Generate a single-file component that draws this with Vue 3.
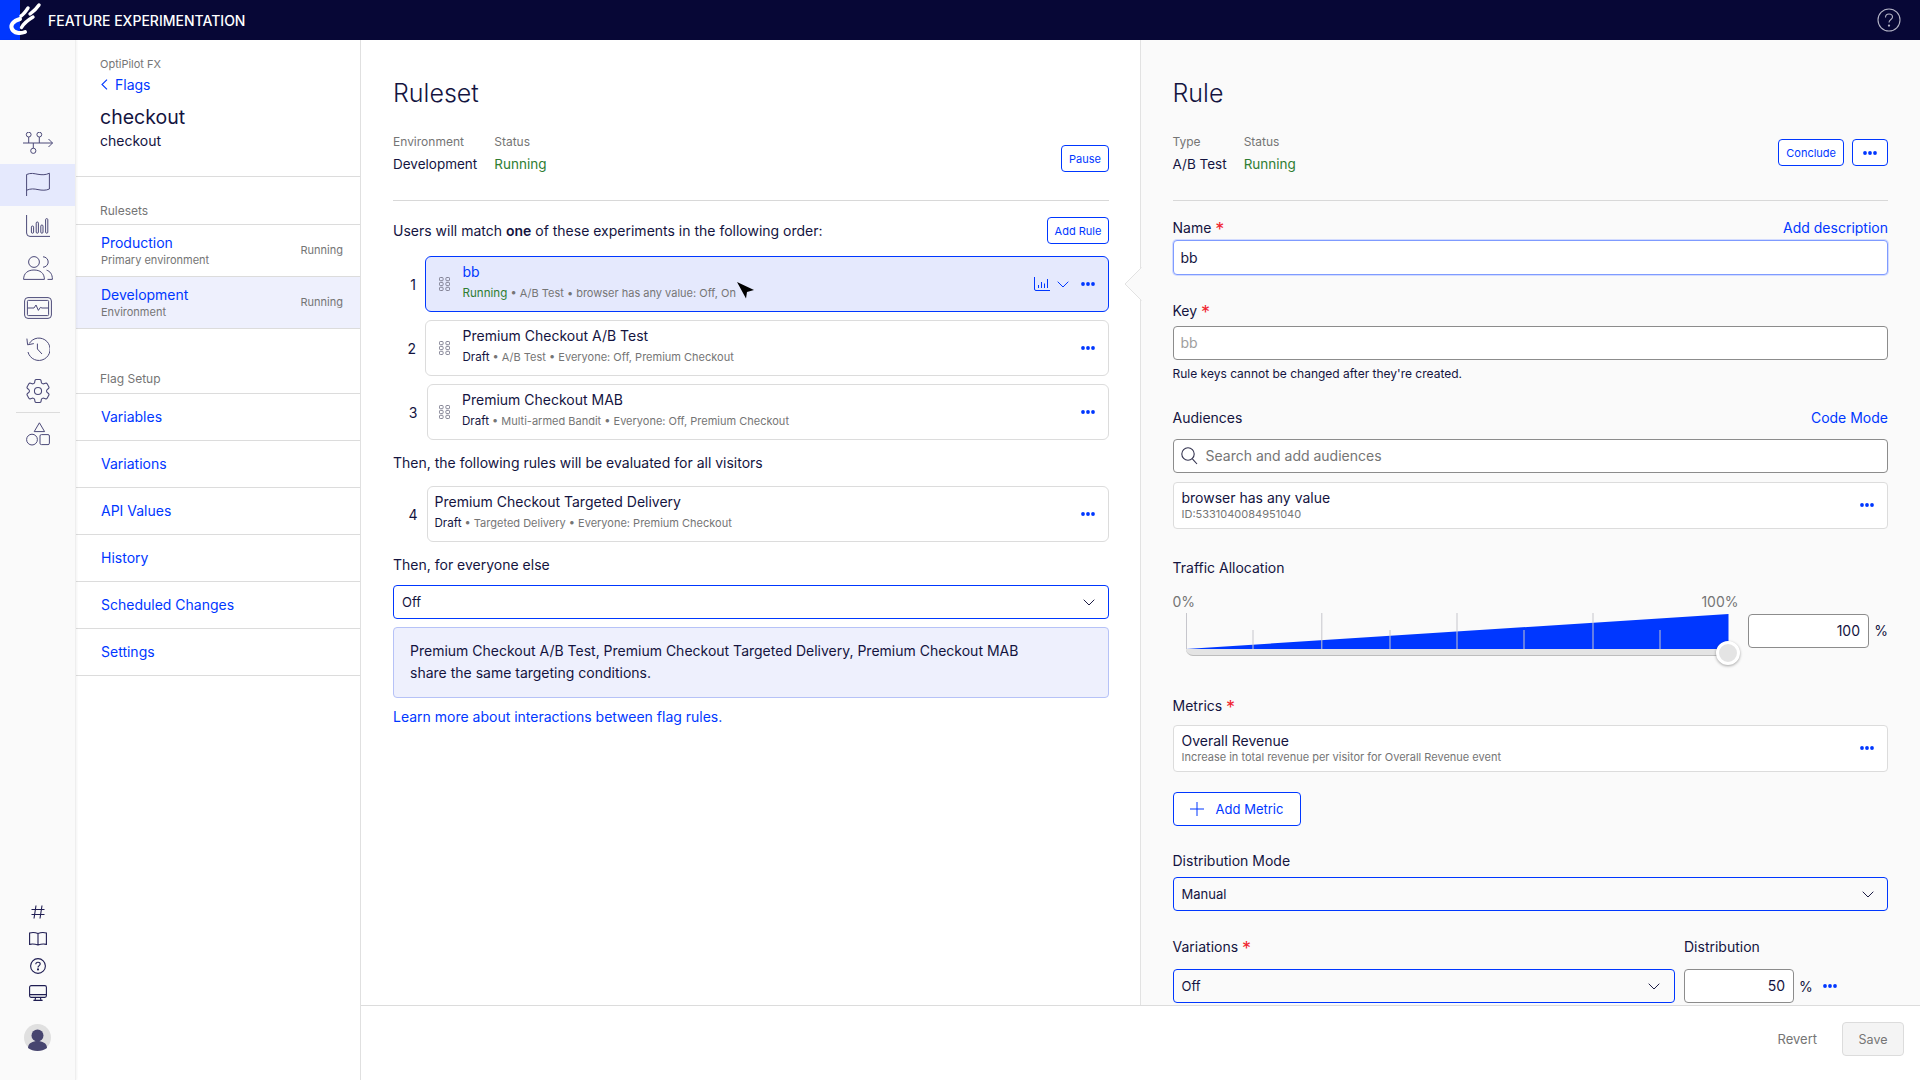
<script setup>
const railIcons = ['network', 'flag', 'chart', 'people', 'monitor', 'history', 'gear']
const setup = ['Variables', 'Variations', 'API Values', 'History', 'Scheduled Changes', 'Settings']
const rules = [
  { n: 1, title: 'bb', status: 'Running', rest: ' • A/B Test • browser has any value: Off, On', active: true },
  { n: 2, title: 'Premium Checkout A/B Test', status: 'Draft', rest: ' • A/B Test • Everyone: Off, Premium Checkout' },
  { n: 3, title: 'Premium Checkout MAB', status: 'Draft', rest: ' • Multi-armed Bandit • Everyone: Off, Premium Checkout', wide: true }
]
const tallTicks = [0.5, 135.8, 271, 407]
const shortTicks = [67, 204, 338, 474]
</script>

<template>
  <div class="app">
    <header class="topbar">
      <div class="logo">
        <svg width="48" height="40" viewBox="0 0 48 40" fill="none" stroke="#fff" stroke-linecap="round">
          <path d="M20 19 C13 21 10 25 12 29 C14 33 20 34 25 32" stroke-width="4" />
          <path d="M33 17 C28 20 24 23 21.5 27.5" stroke-width="3.4" />
          <path d="M28 8 C26 11 24 14 21 16" stroke-width="3.4" />
          <path d="M39 5 C37 8 34 11 30 14" stroke-width="3.4" />
        </svg>
      </div>
      <span class="product">FEATURE EXPERIMENTATION</span>
      <svg class="top-help" width="24" height="24" viewBox="0 0 24 24" fill="none" stroke="#b4b4c6" stroke-width="1.1">
        <circle cx="12" cy="12" r="11" />
        <path d="M8.5 9.5 C8.5 7 10.3 6 12 6 C14 6 15.5 7.3 15.5 9 C15.5 11.5 12 11.5 12 14.5" />
        <circle cx="12" cy="17.6" r="0.6" fill="#b4b4c6" />
      </svg>
    </header>

    <div class="body">
      <nav class="rail">
        <div v-for="ic in railIcons" :key="ic" class="rail-cell" :class="{ on: ic === 'flag' }">
          <svg v-if="ic === 'network'" width="30" height="22" viewBox="0 0 30 22" class="ri up">
            <path d="M0 11 H29.5 M25.5 7 L29.5 11 L25.5 15 M5.7 5 V11 M16.3 5 V11 M10.3 11 V16.2" />
            <circle cx="5.7" cy="2.6" r="2.4" /><circle cx="16.3" cy="2.6" r="2.4" /><circle cx="10.3" cy="18.8" r="2.6" />
          </svg>
          <svg v-else-if="ic === 'flag'" width="24" height="24" viewBox="0 0 24 24" class="ri up">
            <path d="M.6 24 V2.5 C5 .6 8 1.6 12 2.3 S20 3 23.4 1.2 V17 C20 18.6 16 18.4 12 17.6 S5 16.4 .6 18.2" />
          </svg>
          <svg v-else-if="ic === 'chart'" width="24" height="22" viewBox="0 0 24 22" class="ri">
            <path d="M.6 0 V18 A3.4 3.4 0 0 0 4 21.4 H24" />
            <rect x="5.4" y="11" width="2.2" height="7.2" rx="1.1" /><rect x="10.2" y="7" width="2.2" height="11.2" rx="1.1" />
            <rect x="14.8" y="10" width="2.2" height="8.2" rx="1.1" /><rect x="19.6" y="3.6" width="2.2" height="14.6" rx="1.1" />
          </svg>
          <svg v-else-if="ic === 'people'" width="30" height="24" viewBox="0 0 30 24" class="ri">
            <circle cx="11" cy="6" r="5.4" />
            <path d="M.6 23.4 C.6 17 5 14 11 14 S21.4 17 21.4 23.4 Z M20 .8 A5.2 5.2 0 0 1 20 11.2 M23.6 14.2 C27 15.2 29.4 18 29.4 23.4 H24.5" />
          </svg>
          <svg v-else-if="ic === 'monitor'" width="28" height="22" viewBox="0 0 28 22" class="ri up">
            <rect x=".6" y=".6" width="26.8" height="20.8" rx="3.4" />
            <rect x="3.4" y="3.4" width="21.2" height="15.2" rx="1" />
            <path d="M3.4 11 H10 L12 8 L14.4 13.4 L16.4 10.4 L18 11 H24.6" />
          </svg>
          <svg v-else-if="ic === 'history'" width="24" height="24" viewBox="0 0 24 24" class="ri up">
            <path d="M3.2 6.6 A11.2 11.2 0 1 1 2 15 M.9 1.6 L1.6 7.8 L7.8 6.6 M11.4 6.6 L11.4 12 L16 17" />
          </svg>
          <svg v-else width="24" height="24" viewBox="2.6 2.6 18.8 18.8" class="ri gear">
            <path d="M9.594 3.94c.09-.542.56-.94 1.11-.94h2.593c.55 0 1.02.398 1.11.94l.213 1.281c.063.374.313.686.645.87.074.04.147.083.22.127.325.196.72.257 1.075.124l1.217-.456a1.125 1.125 0 0 1 1.37.49l1.296 2.247a1.125 1.125 0 0 1-.26 1.431l-1.003.827c-.293.241-.438.613-.43.992a7.723 7.723 0 0 1 0 .255c-.008.378.137.75.43.991l1.004.827c.424.35.534.955.26 1.43l-1.298 2.247a1.125 1.125 0 0 1-1.369.491l-1.217-.456c-.355-.133-.75-.072-1.076.124a6.47 6.47 0 0 1-.22.128c-.331.183-.581.495-.644.869l-.213 1.281c-.09.543-.56.94-1.11.94h-2.594c-.55 0-1.019-.398-1.11-.94l-.213-1.281c-.062-.374-.312-.686-.644-.87a6.52 6.52 0 0 1-.22-.127c-.325-.196-.72-.257-1.076-.124l-1.217.456a1.125 1.125 0 0 1-1.369-.49l-1.297-2.247a1.125 1.125 0 0 1 .26-1.431l1.004-.827c.292-.24.437-.613.43-.991a6.932 6.932 0 0 1 0-.255c.007-.38-.138-.751-.43-.992l-1.004-.827a1.125 1.125 0 0 1-.26-1.43l1.297-2.247a1.125 1.125 0 0 1 1.37-.491l1.216.456c.356.133.751.072 1.076-.124.072-.044.146-.086.22-.128.332-.183.582-.495.644-.869l.214-1.28Z" />
            <circle cx="12" cy="12" r="2.8" />
          </svg>
        </div>
        <div class="rail-sep"></div>
        <div class="rail-cell">
          <svg width="24" height="24" viewBox="0 0 24 24" class="ri">
            <path d="M13.4 .8 L18.6 9.6 H8.2 Z" />
            <circle cx="6" cy="17.6" r="5.4" />
            <rect x="14" y="12.6" width="9.4" height="10" rx="1.4" />
          </svg>
        </div>

        <div class="rail-bottom">
          <div class="mini">
            <svg width="14" height="14" viewBox="0 0 14 14" class="ri2">
              <path d="M5 .5 L3 13.5 M11 .5 L9 13.5 M.5 4.5 H13.5 M.5 9.5 H13.5" />
            </svg>
          </div>
          <div class="mini">
            <svg width="18" height="14" viewBox="0 0 18 14" class="ri2">
              <path d="M9 1.4 C6 .4 3 .4 .6 1 V12.4 C3 11.8 6 12 9 13 C12 12 15 11.8 17.4 12.4 V1 C15 .4 12 .4 9 1.4 Z M9 1.4 V13" />
            </svg>
          </div>
          <div class="mini">
            <svg width="16" height="16" viewBox="0 0 16 16" class="ri2">
              <circle cx="8" cy="8" r="7.4" />
              <path d="M5.8 6.2 C5.8 4.8 6.8 4.2 8 4.2 C9.2 4.2 10.2 5 10.2 6 C10.2 7.6 8 7.6 8 9.4" />
              <circle cx="8" cy="11.4" r=".5" />
            </svg>
          </div>
          <div class="mini">
            <svg width="18" height="16" viewBox="0 0 18 16" class="ri2">
              <rect x=".6" y=".6" width="16.8" height="11.8" rx="1.6" />
              <path d="M.6 9.6 H17.4 M6.6 12.4 L6 15.4 M11.4 12.4 L12 15.4 M4.4 15.4 H13.6" />
            </svg>
          </div>
          <div class="avatar">
            <svg width="27" height="27" viewBox="0 0 27 27">
              <circle cx="13.5" cy="13.5" r="13.5" fill="#e0e0e0" />
              <circle cx="13.5" cy="11.5" r="6" fill="#47456f" />
              <path d="M4 24 C4 19 9 17 13.5 17 S23 19 23 24 C18 28 9 28 4 24 Z" fill="#47456f" />
            </svg>
          </div>
        </div>
      </nav>

      <aside class="sidebar">
        <div class="side-head">
          <div class="proj">OptiPilot FX</div>
          <a class="back">
            <svg width="7" height="11" viewBox="0 0 7 11" fill="none" stroke="#0037ff" stroke-width="1.1"><path d="M6 .6 L1 5.5 L6 10.4" /></svg>
            Flags
          </a>
          <div class="flag-name">checkout</div>
          <div class="flag-key">checkout</div>
        </div>

        <div class="side-title">Rulesets</div>
        <div class="env">
          <div>
            <div class="env-name">Production</div>
            <div class="env-sub">Primary environment</div>
          </div>
          <span class="env-status">Running</span>
        </div>
        <div class="env env-on">
          <div>
            <div class="env-name">Development</div>
            <div class="env-sub">Environment</div>
          </div>
          <span class="env-status">Running</span>
        </div>

        <div class="side-title second">Flag Setup</div>
        <a v-for="s in setup" :key="s" class="setup-row">{{ s }}</a>
      </aside>

      <div class="workspace">
        <div class="panels">
          <section class="panel mid">
            <h1 class="title">Ruleset</h1>
            <div class="meta-row">
              <div class="meta">
                <div class="meta-l">Environment</div>
                <div class="meta-v">Development</div>
              </div>
              <div class="meta">
                <div class="meta-l">Status</div>
                <div class="meta-v green">Running</div>
              </div>
              <button class="btn pause">Pause</button>
            </div>

            <div class="users-row">
              <span>Users will match <b>one</b> of these experiments in the following order:</span>
              <button class="btn add-rule">Add Rule</button>
            </div>

            <div class="rules">
              <div v-for="r in rules" :key="r.n" class="rule-line" :class="{ wide: r.wide }">
                <span class="num">{{ r.n }}</span>
                <div class="rule" :class="{ active: r.active }">
                  <svg class="drag" width="11" height="14" viewBox="0 0 11 14" fill="none" stroke="#77778a" stroke-width=".9">
                    <rect x=".5" y=".5" width="3.6" height="3.2" rx=".8" /><rect x="6.9" y=".5" width="3.6" height="3.2" rx=".8" />
                    <rect x=".5" y="5.4" width="3.6" height="3.2" rx=".8" /><rect x="6.9" y="5.4" width="3.6" height="3.2" rx=".8" />
                    <rect x=".5" y="10.3" width="3.6" height="3.2" rx=".8" /><rect x="6.9" y="10.3" width="3.6" height="3.2" rx=".8" />
                  </svg>
                  <div class="rtext">
                    <div class="rtitle">{{ r.title }}</div>
                    <div class="rsub"><span class="rstatus" :class="r.active ? 'green' : 'dark'">{{ r.status }}</span>{{ r.rest }}</div>
                  </div>
                  <template v-if="r.active">
                    <svg class="rchart" width="16" height="14" viewBox="0 0 16 14" fill="none" stroke="#0037ff" stroke-width="1">
                      <path d="M.5 0 V12 A1.5 1.5 0 0 0 2 13.5 H16 M4.5 11 V8 M7.5 11 V5 M10.5 11 V6.5 M13.5 11 V2" />
                    </svg>
                    <svg class="rchev" width="12" height="7" viewBox="0 0 12 7" fill="none" stroke="#0037ff" stroke-width="1"><path d="M.7 .7 L6 6 L11.3 .7" /></svg>
                  </template>
                  <svg class="dots" width="14" height="4" viewBox="0 0 14 4" fill="#0037ff"><circle cx="2" cy="2" r="1.9" /><circle cx="7" cy="2" r="1.9" /><circle cx="12" cy="2" r="1.9" /></svg>
                  <svg v-if="r.active" class="cursor" width="18" height="17" viewBox="0 0 18 17" fill="#000"><polygon points="0,0 17,8 10,10 9,16.5" /></svg>
                </div>
              </div>
            </div>

            <p class="then first">Then, the following rules will be evaluated for all visitors</p>
            <div class="rule-line wide solo">
              <span class="num">4</span>
              <div class="rule no-drag">
                <div class="rtext">
                  <div class="rtitle">Premium Checkout Targeted Delivery</div>
                  <div class="rsub"><span class="rstatus dark">Draft</span> • Targeted Delivery • Everyone: Premium Checkout</div>
                </div>
                <svg class="dots" width="14" height="4" viewBox="0 0 14 4" fill="#0037ff"><circle cx="2" cy="2" r="1.9" /><circle cx="7" cy="2" r="1.9" /><circle cx="12" cy="2" r="1.9" /></svg>
              </div>
            </div>

            <p class="then">Then, for everyone else</p>
            <div class="select else">
              <span>Off</span>
              <svg width="12" height="7" viewBox="0 0 12 7" fill="none" stroke="#1d1d45" stroke-width="1"><path d="M.7 .7 L6 6 L11.3 .7" /></svg>
            </div>
            <div class="info">
              Premium Checkout A/B Test, Premium Checkout Targeted Delivery, Premium Checkout MAB<br />
              share the same targeting conditions.
            </div>
            <a class="link learn">Learn more about interactions between flag rules.</a>
          </section>

          <section class="panel side">
            <svg class="notch" width="18" height="34" viewBox="0 0 18 34">
              <polygon points="17.5,0.5 1,17 17.5,33.5 18,33.5 18,0.5" fill="#fafafa" />
              <path d="M17.5 .5 L1 17 L17.5 33.5" fill="none" stroke="#e2e2e2" />
            </svg>
            <h1 class="title">Rule</h1>
            <div class="meta-row">
              <div class="meta">
                <div class="meta-l">Type</div>
                <div class="meta-v">A/B Test</div>
              </div>
              <div class="meta">
                <div class="meta-l">Status</div>
                <div class="meta-v green">Running</div>
              </div>
              <div class="meta-btns">
                <button class="btn">Conclude</button>
                <button class="btn more">
                  <svg width="14" height="4" viewBox="0 0 14 4" fill="#0037ff"><circle cx="2" cy="2" r="1.9" /><circle cx="7" cy="2" r="1.9" /><circle cx="12" cy="2" r="1.9" /></svg>
                </button>
              </div>
            </div>

            <div class="lab l-name"><span>Name <i>*</i></span><a class="link">Add description</a></div>
            <div class="input focus">bb</div>

            <div class="lab l-key"><span>Key <i>*</i></span></div>
            <div class="input key">bb</div>
            <div class="hint">Rule keys cannot be changed after they're created.</div>

            <div class="lab l-aud"><span>Audiences</span><a class="link">Code Mode</a></div>
            <div class="input search">
              <svg width="17" height="18" viewBox="0 0 17 18" fill="none" stroke="#33334f" stroke-width="1.1">
                <circle cx="7" cy="7" r="6.2" /><path d="M11.4 11.8 L16 17" />
              </svg>
              <span>Search and add audiences</span>
            </div>
            <div class="card aud">
              <div>
                <div class="card-t">browser has any value</div>
                <div class="card-s">ID:5331040084951040</div>
              </div>
              <svg width="14" height="4" viewBox="0 0 14 4" fill="#0037ff"><circle cx="2" cy="2" r="1.9" /><circle cx="7" cy="2" r="1.9" /><circle cx="12" cy="2" r="1.9" /></svg>
            </div>

            <div class="lab l-traffic"><span>Traffic Allocation</span></div>
            <div class="traffic">
              <div class="slider">
                <div class="ends"><span>0%</span><span>100%</span></div>
                <svg class="graph" width="543" height="36" viewBox="0 0 543 36">
                  <polygon points="0,36 542.5,1 542.5,36" fill="#0037ff" />
                  <path v-for="t in tallTicks" :key="t" :d="`M${t} 0 V36`" stroke="#c6c6cc" stroke-width="1" />
                  <path v-for="t in shortTicks" :key="t" :d="`M${t} 17 V36`" stroke="#c6c6cc" stroke-width="1" />
                </svg>
                <div class="track"></div>
                <div class="thumb"></div>
              </div>
              <div class="input pct">100</div>
              <span class="pct-sign">%</span>
            </div>

            <div class="lab l-metrics"><span>Metrics <i>*</i></span></div>
            <div class="card aud">
              <div>
                <div class="card-t">Overall Revenue</div>
                <div class="card-s">Increase in total revenue per visitor for Overall Revenue event</div>
              </div>
              <svg width="14" height="4" viewBox="0 0 14 4" fill="#0037ff"><circle cx="2" cy="2" r="1.9" /><circle cx="7" cy="2" r="1.9" /><circle cx="12" cy="2" r="1.9" /></svg>
            </div>
            <button class="btn add-metric">
              <svg width="14" height="14" viewBox="0 0 14 14" fill="none" stroke="#0037ff" stroke-width="1"><path d="M7 0 V14 M0 7 H14" /></svg>
              Add Metric
            </button>

            <div class="lab l-dist"><span>Distribution Mode</span></div>
            <div class="select manual">
              <span>Manual</span>
              <svg width="12" height="7" viewBox="0 0 12 7" fill="none" stroke="#1d1d45" stroke-width="1"><path d="M.7 .7 L6 6 L11.3 .7" /></svg>
            </div>

            <div class="var-grid">
              <div class="lab"><span>Variations <i>*</i></span></div>
              <div class="lab"><span>Distribution</span></div>
              <div class="select">
                <span>Off</span>
                <svg width="12" height="7" viewBox="0 0 12 7" fill="none" stroke="#1d1d45" stroke-width="1"><path d="M.7 .7 L6 6 L11.3 .7" /></svg>
              </div>
              <div class="dist">
                <div class="input pct small">50</div>
                <span class="pct-sign">%</span>
                <svg width="14" height="4" viewBox="0 0 14 4" fill="#0037ff"><circle cx="2" cy="2" r="1.9" /><circle cx="7" cy="2" r="1.9" /><circle cx="12" cy="2" r="1.9" /></svg>
              </div>
            </div>
          </section>
        </div>

        <footer class="footer">
          <span class="revert">Revert</span>
          <span class="save">Save</span>
        </footer>
      </div>
    </div>
  </div>
</template>

<style scoped>
.app {
  width: 1920px;
  height: 1080px;
  display: flex;
  flex-direction: column;
  overflow: hidden;
  background: #fff;
  color: #14143f;
  font-family: Inter, "Liberation Sans", sans-serif;
  font-size: 14px;
}
a { text-decoration: none; }

.topbar {
  height: 40px;
  flex: none;
  display: flex;
  align-items: center;
  background: #070736;
}
.logo {
  width: 48px;
  height: 40px;
  background: linear-gradient(90deg, #0037ff 20px, transparent 20px);
}
.logo svg { display: block; }
.product { color: #fff; font-weight: 500; font-size: 14px; }
.top-help { margin-left: auto; margin-right: 19px; }

.body { flex: 1; min-height: 0; display: flex; }

.rail {
  width: 76px;
  flex: none;
  display: flex;
  flex-direction: column;
  padding-top: 83px;
  background: #fafafa;
  box-sizing: border-box;
  border-right: 1px solid #eeeeee;
  box-shadow: 1px 0 2px rgba(0, 0, 0, .05);
  position: relative;
}
.rail-cell {
  height: 41.3px;
  flex: none;
  display: flex;
  align-items: center;
  justify-content: center;
}
.rail-cell.on { background: #e5e9fd; }
.ri { fill: none; stroke: #4b4978; stroke-width: 1; display: block; }
.ri.up { margin-top: -2px; }
.ri.gear { stroke-width: .85; }
.ri2 { fill: none; stroke: #1f1d52; stroke-width: 1.1; display: block; }
.rail-sep { height: 1px; flex: none; margin: 0 15px 0 16px; background: #dcdcdc; }
.rail-bottom { margin-top: auto; padding-bottom: 29px; }
.mini { height: 27px; display: flex; align-items: center; justify-content: center; }
.avatar { margin-top: 18px; display: flex; justify-content: center; }
.avatar svg { display: block; }

.sidebar {
  width: 285px;
  flex: none;
  box-sizing: border-box;
  border-right: 1px solid #e0e0e0;
  background: #fff;
}
.side-head {
  height: 137px;
  box-sizing: border-box;
  border-bottom: 1px solid #dcdcdc;
  padding: 17px 0 0 24px;
}
.proj { font-size: 11px; line-height: 14px; color: #757575; }
.back {
  display: flex;
  align-items: center;
  gap: 7px;
  height: 20px;
  margin-top: 3px;
  margin-bottom: 1px;
  padding-left: 1px;
  color: #0037ff;
  font-size: 14px;
}
.flag-name { font-size: 19.5px; line-height: 28px; margin-top: 9px; color: #14143f; }
.flag-key { font-size: 14px; line-height: 20px; }

.side-title {
  font-size: 12px;
  line-height: 16px;
  color: #757575;
  padding: 26px 0 5px 24px;
  border-bottom: 1px solid #dcdcdc;
}
.side-title.second { padding-top: 0; padding-bottom: 6px; margin-top: 42px; }
.env {
  height: 52px;
  box-sizing: border-box;
  border-bottom: 1px solid #dcdcdc;
  display: flex;
  align-items: center;
  justify-content: space-between;
  padding: 0 17px 0 25px;
}
.env-on { background: #eef0fd; }
.env-name { color: #0037ff; font-size: 14px; line-height: 18px; }
.env-sub { color: #757575; font-size: 11px; line-height: 15px; margin-top: 1px; }
.env-status { color: #757575; font-size: 11px; margin-top: -2px; }
.setup-row {
  height: 47px;
  box-sizing: border-box;
  border-bottom: 1px solid #dcdcdc;
  display: flex;
  align-items: center;
  padding: 0 0 2px 25px;
  color: #0037ff;
  font-size: 14px;
}

.workspace { flex: 1; min-width: 0; display: flex; flex-direction: column; }
.panels { height: 965px; flex: none; display: flex; }
.panel { box-sizing: border-box; padding-top: 38px; position: relative; }
.mid { width: 779px; flex: none; padding-left: 32px; padding-right: 31px; }
.side {
  flex: none;
  width: 780px;
  min-width: 0;
  background: #fafafa;
  border-left: 1px solid #e2e2e2;
  padding-left: 31.5px;
  padding-right: 32px;
}
.notch { position: absolute; left: -17px; top: 227px; display: block; }
.title { margin: 0; font-size: 25px; font-weight: 300; line-height: 30px; color: #14143f; }

.meta-row {
  display: flex;
  height: 68px;
  box-sizing: border-box;
  margin-top: 25px;
  gap: 17px;
  border-bottom: 1px solid #d8d8d8;
  align-items: flex-start;
}
.meta-l { font-size: 12px; line-height: 18px; color: #757575; }
.meta-v { font-size: 13.5px; line-height: 22px; margin-top: 2px; }
.green { color: #2e7d32; }
.dark { color: #14143f; }
.btn {
  font-family: inherit;
  font-size: 11px;
  color: #0037ff;
  background: #fff;
  border: 1px solid #0037ff;
  border-radius: 4px;
  height: 27px;
  padding: 0 7px;
  box-sizing: border-box;
}
.pause { margin-left: auto; margin-top: 12px; width: 48px; padding: 0; }
.add-rule { width: 62px; padding: 0; }
.meta-btns { margin-left: auto; margin-top: 6px; display: flex; gap: 8px; }
.more { width: 36px; padding: 0; display: flex; align-items: center; justify-content: center; }

.users-row {
  display: flex;
  justify-content: space-between;
  align-items: center;
  margin-top: 16px;
}
.users-row b { font-weight: 600; }
.rules { margin-top: 12px; display: flex; flex-direction: column; gap: 8px; }
.rule-line { display: flex; height: 56px; }
.num {
  width: 32px;
  flex: none;
  display: flex;
  align-items: center;
  justify-content: flex-end;
  padding-right: 9px;
  box-sizing: border-box;
  font-size: 14px;
}
.wide .num { width: 33.5px; }
.rule {
  flex: 1;
  position: relative;
  display: flex;
  align-items: center;
  box-sizing: border-box;
  border: 1px solid #dcdcdc;
  border-radius: 6px;
  background: #fff;
  padding: 0 13px 0 12.5px;
}
.rule.active { background: #e5e9fd; border-color: #0037ff; }
.rule.no-drag { padding-left: 7px; }
.drag { flex: none; margin-right: 13px; }
.wide .drag { margin-right: 12px; margin-left: -1px; }
.rtext { flex: 1; align-self: stretch; padding-top: 5px; }
.rtitle { font-size: 14px; line-height: 20px; }
.active .rtitle { color: #0037ff; }
.rsub { font-size: 11px; line-height: 16px; margin-top: 3px; color: #757575; }
.rstatus { font-size: 11.6px; }
.rchart { margin-right: 7px; }
.rchev { margin-right: 12px; }
.cursor { position: absolute; left: 311px; top: 25px; }

.then { margin: 12px 0 0; line-height: 22px; font-size: 14px; }
.solo { margin-top: 12px; }
.select {
  height: 34px;
  box-sizing: border-box;
  border: 1px solid #0037ff;
  border-radius: 4px;
  display: flex;
  align-items: center;
  justify-content: space-between;
  padding: 0 13.5px 0 8px;
  font-size: 13px;
}
.else { margin-top: 9px; background: #fff; }
.info {
  margin-top: 8px;
  height: 71px;
  box-sizing: border-box;
  border: 1px solid #b6c2f7;
  border-radius: 4px;
  background: #eef0fd;
  padding: 12px 16px 0;
  line-height: 22px;
}
.link { color: #0037ff; font-size: 14px; }
.learn { display: block; margin-top: 8px; line-height: 22px; }

.lab {
  display: flex;
  justify-content: space-between;
  font-size: 14px;
  line-height: 20px;
}
.lab i { color: #f0242f; font-style: normal; font-size: 18px; line-height: 14px; vertical-align: -3px; }
.l-name { margin-top: 17px; }
.input {
  box-sizing: border-box;
  height: 34px;
  border: 1px solid #8c8c8c;
  border-radius: 4px;
  background: #fff;
  display: flex;
  align-items: center;
  padding: 0 7px 1px;
  font-size: 14px;
}
.focus {
  margin-top: 2px;
  height: 35px;
  border-color: #7f9bff;
  box-shadow: 0 0 0 1px #d2dbff;
}
.l-key { margin-top: 26px; }
.key { margin-top: 5px; color: #9e9e9e; }
.hint { margin-top: 6px; font-size: 12px; line-height: 16px; }
.l-aud { margin-top: 26px; }
.search { margin-top: 11px; gap: 8px; color: #757575; }
.card {
  height: 47px;
  box-sizing: border-box;
  border: 1px solid #dcdcdc;
  border-radius: 4px;
  background: #fff;
  display: flex;
  align-items: center;
  justify-content: space-between;
  padding: 0 13px 1px 8px;
}
.aud { margin-top: 9px; }
.card-t { font-size: 14px; line-height: 18px; }
.card-s { font-size: 11px; line-height: 14px; color: #757575; }
.l-traffic { margin-top: 29px; }

.traffic { display: flex; align-items: flex-start; }
.slider { width: 566px; flex: none; position: relative; padding-top: 16px; margin-right: 9.5px; }
.ends {
  display: flex;
  justify-content: space-between;
  font-size: 14px;
  line-height: 16px;
  color: #757575;
}
.graph { display: block; margin: 3px 0 0 13px; }
.track {
  width: 543px;
  margin-left: 13px;
  height: 7px;
  box-sizing: border-box;
  background: #e4e4e4;
  border-bottom: 1px solid #bdbdbd;
  border-radius: 0 0 0 7px;
}
.thumb {
  position: absolute;
  left: 543px;
  top: 63px;
  width: 24px;
  height: 24px;
  box-sizing: border-box;
  border-radius: 50%;
  background: #e4e4e4;
  border: 3px solid #fff;
  box-shadow: 0 1px 3px rgba(0, 0, 0, .35);
}
.pct {
  width: 121px;
  margin-top: 36px;
  justify-content: flex-end;
  padding-right: 8px;
  flex: none;
}
.pct-sign { font-size: 14px; margin-left: 10px; }
.traffic .pct-sign { margin-top: 44px; margin-left: auto; }
.l-metrics { margin-top: 40px; }
.add-metric {
  display: flex;
  align-items: center;
  justify-content: center;
  gap: 12px;
  margin-top: 20px;
  width: 128px;
  height: 34px;
  font-size: 13px;
  padding: 0;
}
.l-dist { margin-top: 25px; }
.manual { margin-top: 6px; }
.var-grid {
  margin-top: 26px;
  display: grid;
  grid-template-columns: 502px 1fr;
  column-gap: 9.5px;
  row-gap: 12px;
}
.dist { display: flex; align-items: center; }
.dist .small { width: 110px; margin: 0; }
.dist .pct-sign { margin-left: 5px; margin-right: 10px; }

.footer {
  flex: 1;
  box-sizing: border-box;
  border-top: 1px solid #dcdcdc;
  display: flex;
  align-items: flex-start;
  justify-content: flex-end;
  gap: 25px;
  padding: 16px 16px 0 0;
}
.revert { font-size: 13px; color: #757575; line-height: 34px; }
.save {
  width: 62px;
  height: 34px;
  box-sizing: border-box;
  border: 1px solid #dcdcdc;
  border-radius: 4px;
  background: #f4f4f4;
  color: #757575;
  font-size: 12.5px;
  display: flex;
  align-items: center;
  justify-content: center;
}
</style>
